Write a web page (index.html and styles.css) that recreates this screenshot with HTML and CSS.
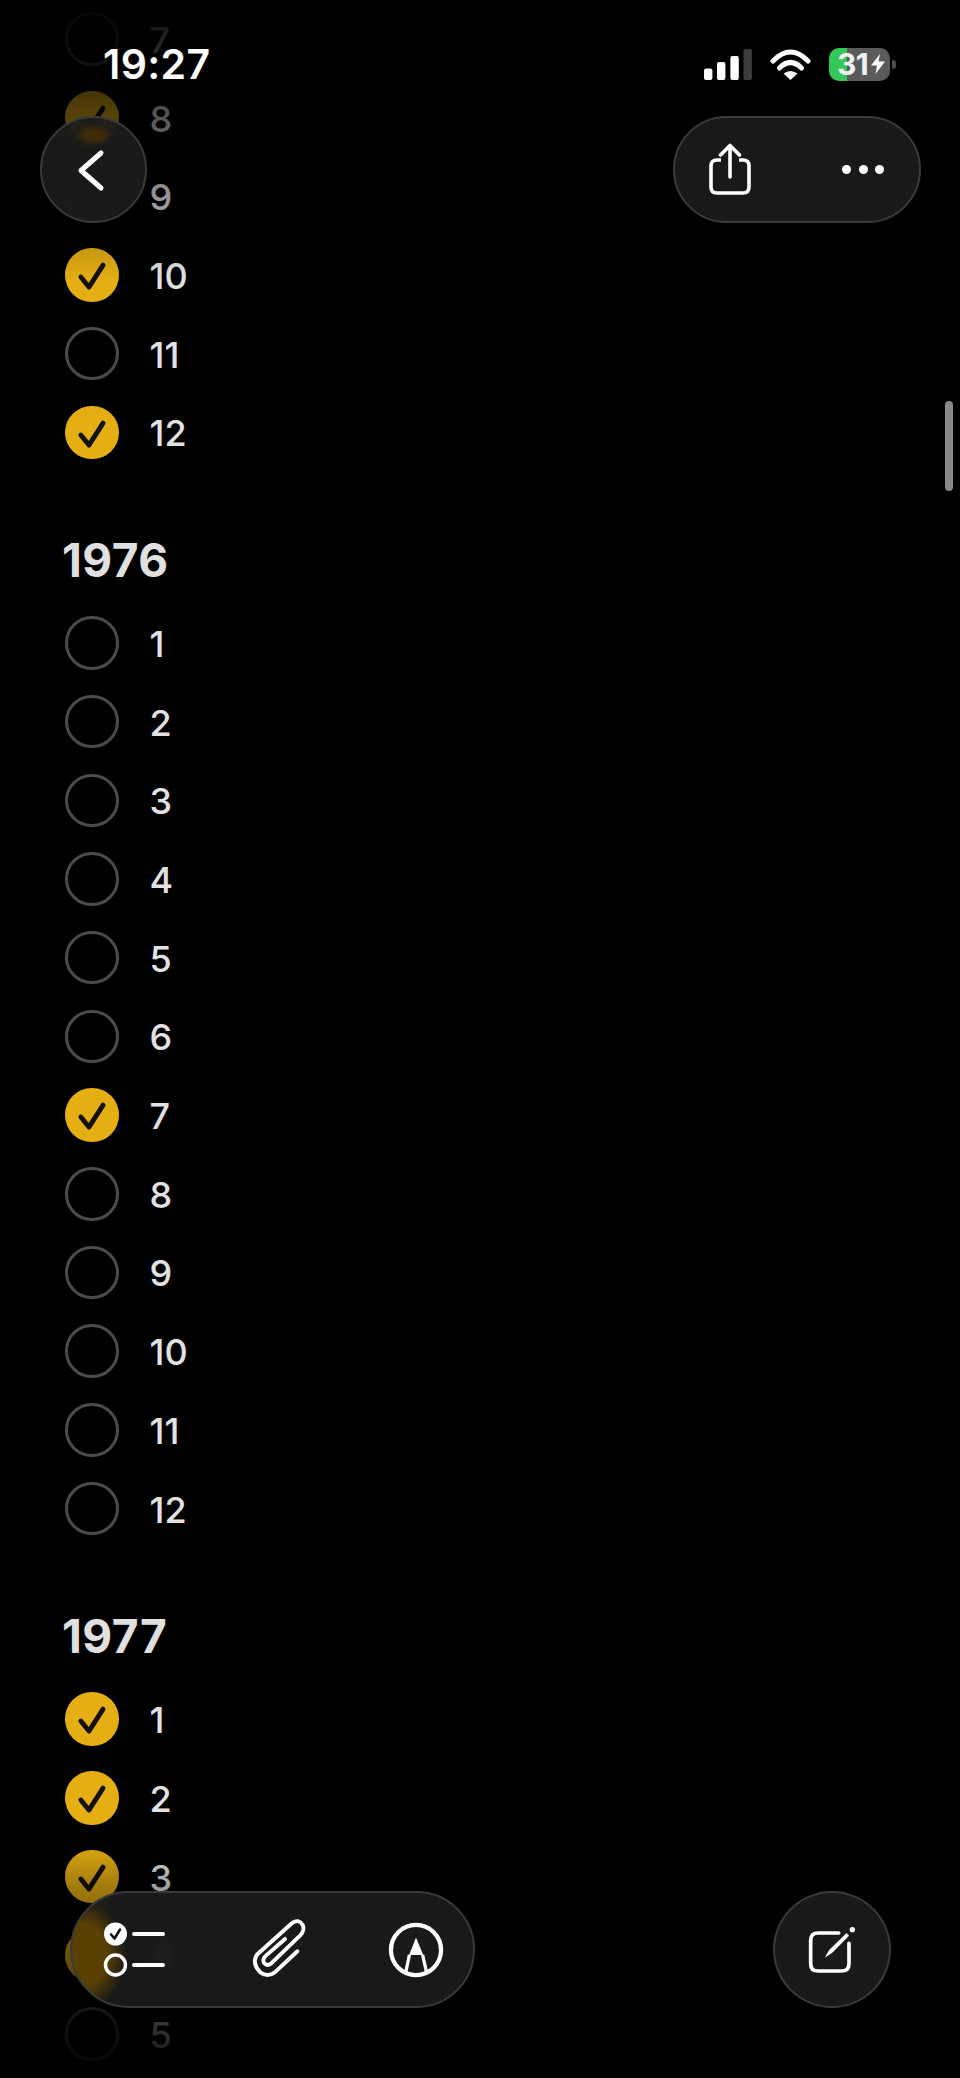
FILE: index.html
```html
<!DOCTYPE html>
<html>
<head>
    <title>Notes</title>
    <link rel="stylesheet" href="styles.css">
</head>
<body>
<svg class="defs" width="0" height="0">
    <symbol id="tick" viewBox="0 0 53 53">
        <path d="M15.7 28.7 L23.7 38.7 L37.7 17" fill="none" stroke="#14110a" stroke-width="4.8" stroke-linecap="round" stroke-linejoin="round"/>
    </symbol>
</svg>

<main class="note">
    <ul class="months">
        <li class="row"><span class="box"></span><span class="num">7</span></li>
        <li class="row"><span class="box done"><svg><use href="#tick"/></svg></span><span class="num">8</span></li>
        <li class="row"><span class="box"></span><span class="num">9</span></li>
        <li class="row"><span class="box done"><svg><use href="#tick"/></svg></span><span class="num">10</span></li>
        <li class="row"><span class="box"></span><span class="num">11</span></li>
        <li class="row"><span class="box done"><svg><use href="#tick"/></svg></span><span class="num">12</span></li>
    </ul>

    <h2 class="year">1976</h2>
    <ul class="months">
        <li class="row"><span class="box"></span><span class="num">1</span></li>
        <li class="row"><span class="box"></span><span class="num">2</span></li>
        <li class="row"><span class="box"></span><span class="num">3</span></li>
        <li class="row"><span class="box"></span><span class="num">4</span></li>
        <li class="row"><span class="box"></span><span class="num">5</span></li>
        <li class="row"><span class="box"></span><span class="num">6</span></li>
        <li class="row"><span class="box done"><svg><use href="#tick"/></svg></span><span class="num">7</span></li>
        <li class="row"><span class="box"></span><span class="num">8</span></li>
        <li class="row"><span class="box"></span><span class="num">9</span></li>
        <li class="row"><span class="box"></span><span class="num">10</span></li>
        <li class="row"><span class="box"></span><span class="num">11</span></li>
        <li class="row"><span class="box"></span><span class="num">12</span></li>
    </ul>

    <h2 class="year">1977</h2>
    <ul class="months">
        <li class="row"><span class="box done"><svg><use href="#tick"/></svg></span><span class="num">1</span></li>
        <li class="row"><span class="box done"><svg><use href="#tick"/></svg></span><span class="num">2</span></li>
        <li class="row"><span class="box done"><svg><use href="#tick"/></svg></span><span class="num">3</span></li>
        <li class="row"><span class="box done"><svg><use href="#tick"/></svg></span><span class="num">4</span></li>
        <li class="row"><span class="box"></span><span class="num">5</span></li>
    </ul>
</main>

<div class="fade-top"></div>
<div class="fade-bottom"></div>
<div class="scrollbar"></div>

<!-- status bar -->
<header class="status">
    <span class="time">19:27</span>
    <div class="status-icons">
        <svg class="signal" width="48" height="31" viewBox="0 0 48 31">
            <rect x="0" y="19.5" width="8.4" height="11.5" rx="2" fill="#fff"/>
            <rect x="13" y="13" width="8.4" height="18" rx="2" fill="#fff"/>
            <rect x="26.4" y="7" width="8.4" height="24" rx="2" fill="#fff"/>
            <rect x="39.5" y="0" width="8.4" height="31" rx="2" fill="#3c3c3c"/>
        </svg>
        <svg class="wifi" width="41" height="31" viewBox="0 0 41 31">
            <path d="M3 12 Q20.5 -6 38 12" fill="none" stroke="#fff" stroke-width="5" stroke-linecap="round"/>
            <path d="M9.5 19 Q20.5 8 31.5 19" fill="none" stroke="#fff" stroke-width="5" stroke-linecap="round"/>
            <path d="M13.5 24.5 Q20.5 19.5 27.5 24.5 L20.5 31 Z" fill="#fff"/>
        </svg>
        <div class="battery">
            <div class="battery-body">
                <span class="battery-level">31</span>
                <svg class="bolt" width="14" height="20" viewBox="0 0 14 20">
                    <path d="M9 0 L0 11.5 L6 11.5 L4.5 20 L14 7.5 L7.5 7.5 Z" fill="#fff"/>
                </svg>
            </div>
            <span class="battery-tip"></span>
        </div>
    </div>
</header>

<button class="glass back">
    <svg width="30" height="44" viewBox="0 0 30 44">
        <path d="M24 5 L4 22.5 L24 40" fill="none" stroke="#fff" stroke-width="5" stroke-linecap="round" stroke-linejoin="round"/>
    </svg>
</button>

<div class="glass actions">
    <svg width="46" height="54" viewBox="0 0 46 54">
        <path d="M14 17 L10 17 Q4 17 4 23 L4 44 Q4 50 10 50 L36 50 Q42 50 42 44 L42 23 Q42 17 36 17 L32 17" fill="none" stroke="#fff" stroke-width="3.6"/>
        <path d="M23 34 L23 3 M13.5 12 L23 2.5 L32.5 12" fill="none" stroke="#fff" stroke-width="3.6" stroke-linecap="round" stroke-linejoin="round"/>
    </svg>
    <div class="dots"><span></span><span></span><span></span></div>
</div>

<div class="glass tools">
    <svg width="62" height="58" viewBox="0 0 62 58">
        <circle cx="12.5" cy="13" r="11.5" fill="#fff"/>
        <path d="M8 13.5 L11.5 17.5 L17 8.5" fill="none" stroke="#111" stroke-width="2.6" stroke-linecap="round" stroke-linejoin="round"/>
        <circle cx="12.5" cy="44" r="10" fill="none" stroke="#fff" stroke-width="3.4"/>
        <path d="M31 13 L60 13 M31 44 L60 44" stroke="#fff" stroke-width="4" stroke-linecap="round"/>
    </svg>
    <svg class="clip" width="60" height="67" viewBox="750 360 170 190">
        <path d="M890 460 L826 520 Q805 535 785 520 Q760 495 775 470 L875 380 Q893 367 905 385 Q912 400 898 415 L815 495 Q803 503 795 493 Q790 483 800 473 L855 425" fill="none" stroke="#fff" stroke-width="11" stroke-linecap="round" stroke-linejoin="round"/>
    </svg>
    <svg width="58" height="58" viewBox="1160 362 176 176">
        <circle cx="1248" cy="450" r="76" fill="none" stroke="#fff" stroke-width="13"/>
        <path d="M1248 412 L1270 465 L1227 465 Z" fill="#fff"/>
        <path d="M1228 465 L1216 522 M1268 465 L1281 522" stroke="#fff" stroke-width="10" fill="none"/>
    </svg>
</div>

<button class="glass compose">
    <svg width="50" height="50" viewBox="205 190 150 150">
        <path d="M300 214 L238 214 Q216 214 216 236 L216 306 Q216 328 238 328 L308 328 Q331 328 331 306 L331 245" fill="none" stroke="#fff" stroke-width="11" stroke-linecap="round"/>
        <path d="M258 288 L272 264 L324 214 L331 222 L280 274 Z" fill="#fff"/>
        <circle cx="341" cy="204" r="8" fill="#fff"/>
    </svg>
</button>
</body>
</html>
```

FILE: styles.css
```css
html, body {
    height: 2078px;
    overflow: hidden;
}
body {
    position: relative;
    margin: 0;
    background-color: #000;
    color: #e2e2e2;
    font-family: Inter, "Liberation Sans", sans-serif;
}
.defs {
    position: absolute;
}
.note {
    margin-top: -0.5px;
    padding-left: 65px;
}
.months {
    margin: 0;
    padding: 0;
    list-style: none;
}
.row {
    display: flex;
    align-items: center;
    gap: 31px;
    height: 78.7px;
}
.box {
    box-sizing: border-box;
    width: 53.5px;
    height: 53.5px;
    border: 3.5px solid #4b4b4b;
    border-radius: 50%;
}
.box.done {
    border: none;
    background-color: #e5ae13;
}
.box svg {
    display: block;
    width: 53.5px;
    height: 53.5px;
}
.num {
    position: relative;
    top: 1px;
    font-size: 36px;
    font-weight: 500;
    line-height: 1;
}
.year {
    margin: 60px 0 16px -3px;
    font-size: 46px;
    font-weight: 700;
    line-height: 56px;
    letter-spacing: 0.5px;
    color: #e0e0e0;
}

.fade-top {
    position: absolute;
    top: 0;
    left: 0;
    right: 0;
    height: 280px;
    background: linear-gradient(to bottom, rgba(0,0,0,.95) 0, rgba(0,0,0,.85) 40px, rgba(0,0,0,.62) 117px, rgba(0,0,0,.35) 196px, rgba(0,0,0,0) 280px);
}
.fade-bottom {
    position: absolute;
    bottom: 0;
    left: 0;
    right: 0;
    height: 240px;
    background: linear-gradient(to top, rgba(0,0,0,.95) 0, rgba(0,0,0,.8) 44px, rgba(0,0,0,.3) 190px, rgba(0,0,0,0) 240px);
}
.scrollbar {
    position: absolute;
    top: 401px;
    left: 945px;
    width: 8px;
    height: 90px;
    border-radius: 4px;
    background-color: #888;
}

.status {
    position: absolute;
    top: 46px;
    left: 103px;
    right: 64px;
    display: flex;
    justify-content: space-between;
    align-items: center;
    height: 36px;
}
.time {
    font-size: 41px;
    font-weight: 600;
    line-height: 36px;
    color: #fff;
    letter-spacing: 0.3px;
}
.status-icons {
    display: flex;
    align-items: center;
    gap: 18px;
}
.signal {
    margin-left: -2px;
}
.battery {
    display: flex;
    align-items: center;
    gap: 2px;
}
.battery-body {
    display: flex;
    align-items: center;
    gap: 3px;
    box-sizing: border-box;
    width: 61px;
    height: 33px;
    padding-left: 8px;
    border-radius: 10px;
    background: linear-gradient(to right, #34c759 18px, #5b5b5b 18px);
}
.battery-level {
    font-size: 30px;
    font-weight: 700;
    line-height: 33px;
    color: #f2f2f2;
    letter-spacing: -0.5px;
}
.battery-tip {
    width: 4px;
    height: 9px;
    border-radius: 0 3px 3px 0;
    background-color: #4a4a4a;
}

.glass {
    position: absolute;
    box-sizing: border-box;
    display: flex;
    align-items: center;
    padding: 0;
    border: 2px solid #3a3a3a;
    background-color: rgba(28, 28, 28, 0.9);
    backdrop-filter: blur(6px);
}
.back {
    top: 116px;
    left: 40px;
    justify-content: center;
    width: 107px;
    height: 107px;
    border-radius: 50%;
    padding-right: 4px;
    background-image: radial-gradient(ellipse 19px 11px at 50% 17px, #3f2c06 40%, rgba(63, 44, 6, 0) 100%);
}
.actions {
    top: 116px;
    left: 673px;
    justify-content: space-between;
    width: 248px;
    height: 107px;
    padding: 0 35px 0 32px;
    border-radius: 54px;
}
.dots {
    display: flex;
    gap: 7.5px;
}
.dots span {
    width: 9px;
    height: 9px;
    border-radius: 50%;
    background-color: #fff;
}
.tools {
    top: 1891px;
    left: 70px;
    justify-content: space-between;
    width: 405px;
    height: 117px;
    padding: 0 28px 0 31px;
    border-radius: 59px;
    background-image: radial-gradient(ellipse 44px 56px at 10px 62px, #5a4003 55%, rgba(90, 64, 3, 0) 100%);
}
.clip {
    margin-left: 3px;
}
.compose {
    top: 1891px;
    left: 773px;
    justify-content: center;
    width: 118px;
    height: 117px;
    border-radius: 50%;
}
```
